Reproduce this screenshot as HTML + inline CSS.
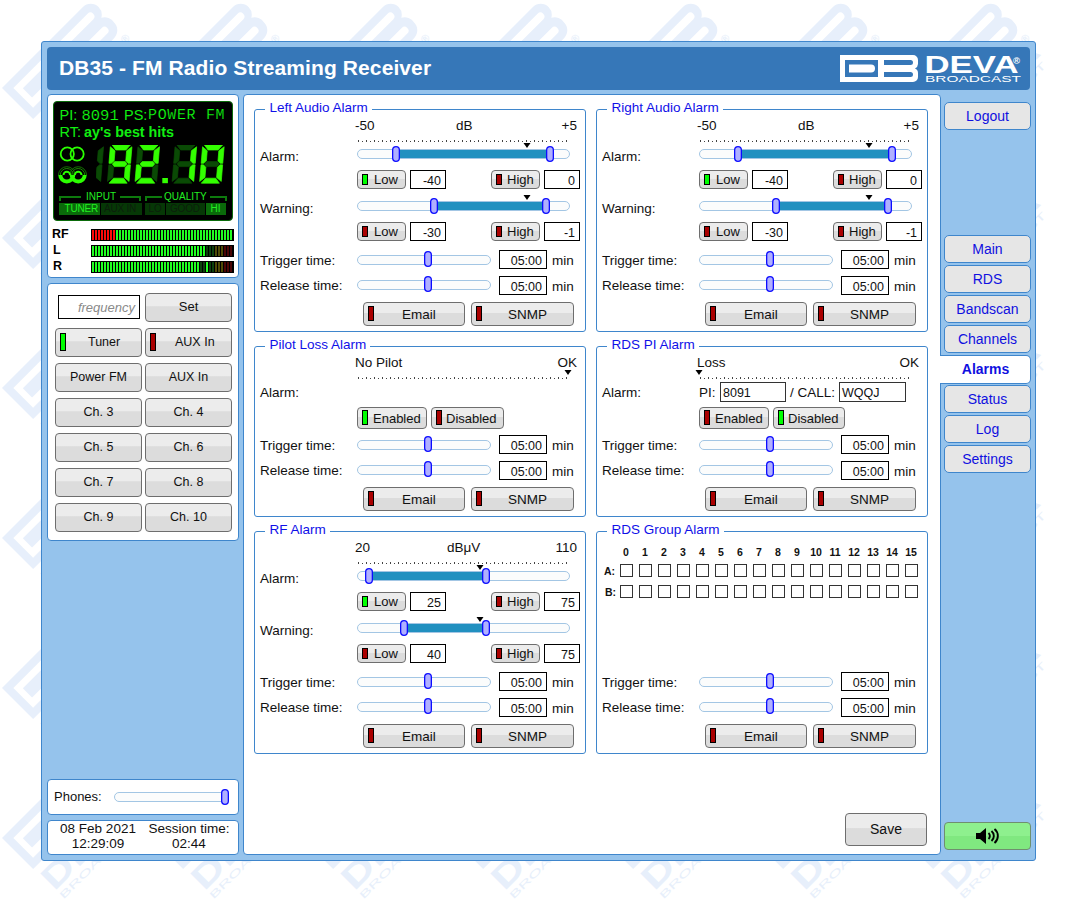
<!DOCTYPE html><html><head><meta charset="utf-8"><style>

html,body{margin:0;padding:0;}
body{width:1077px;height:902px;position:relative;overflow:hidden;background:#fff;font-family:'Liberation Sans', sans-serif;}
div{position:absolute;box-sizing:content-box;}
.t{white-space:nowrap;font-size:13.5px;color:#111;line-height:0;}
.t::before{content:"";}
.bt{text-align:center;white-space:nowrap;color:#111;}
.btn{border:1px solid #6e6e6e;border-radius:4px;background:linear-gradient(#ececec 0,#ececec 44%,#dcdcdc 47%,#dcdcdc 100%);}
.led{border:1px solid #000;}
.inp{border:1px solid #000;background:#fff;white-space:nowrap;color:#111;}
.trk{border:1px solid #a3c6e4;border-radius:5px;background:#fbfcfc;}
.rng{background:#2190c0;}
.thm{width:4px;height:12px;border:2px solid #0a0aff;border-radius:4px;background:#b0b0ff;}
.fs{border:1px solid #3f86cc;border-radius:3px;}
.lg{background:#fff;color:#1010e8;font-size:13.5px;line-height:18px;height:18px;padding:0 4px 0 5px;white-space:nowrap;}
.nav{border:1px solid #3f86cc;border-radius:5px;background:#e6e6e6;}

</style></head><body>
<svg style="position:absolute;left:0;top:0" width="1050" height="902"><defs><g id="wm"><path fill="#e7effb" fill-rule="evenodd" d="M0,0 H114.5 A11,11 0 0 1 125.5,11 A11,11 0 0 1 120,20.5 A11,11 0 0 1 125.5,33 A11,11 0 0 1 114.5,44 H0 Z M8,8 V36 H61 V8 Z M71,8 V16 H113 A4,4 0 0 0 113,8 Z M71,28 V36 H113 A4,4 0 0 0 113,28 Z M14.5,15 H50 A6.5,6.5 0 0 1 50,28 H14.5 Z"/><text x="-1" y="75" font-family="'Liberation Sans', sans-serif" font-weight="bold" font-size="33" fill="#e7effb" textLength="124" lengthAdjust="spacingAndGlyphs">DEVA</text><text x="118" y="56" font-family="'Liberation Sans', sans-serif" font-weight="bold" font-size="11" fill="#e7effb">®</text><text x="0" y="87" font-family="'Liberation Sans', sans-serif" font-size="10" fill="#e7effb" textLength="118" lengthAdjust="spacingAndGlyphs">BROADCAST</text></g></defs>
<use href="#wm" transform="translate(-148,-62) rotate(-45)"/>
<use href="#wm" transform="translate(2,-62) rotate(-45)"/>
<use href="#wm" transform="translate(152,-62) rotate(-45)"/>
<use href="#wm" transform="translate(302,-62) rotate(-45)"/>
<use href="#wm" transform="translate(452,-62) rotate(-45)"/>
<use href="#wm" transform="translate(602,-62) rotate(-45)"/>
<use href="#wm" transform="translate(752,-62) rotate(-45)"/>
<use href="#wm" transform="translate(902,-62) rotate(-45)"/>
<use href="#wm" transform="translate(-148,88) rotate(-45)"/>
<use href="#wm" transform="translate(2,88) rotate(-45)"/>
<use href="#wm" transform="translate(152,88) rotate(-45)"/>
<use href="#wm" transform="translate(302,88) rotate(-45)"/>
<use href="#wm" transform="translate(452,88) rotate(-45)"/>
<use href="#wm" transform="translate(602,88) rotate(-45)"/>
<use href="#wm" transform="translate(752,88) rotate(-45)"/>
<use href="#wm" transform="translate(902,88) rotate(-45)"/>
<use href="#wm" transform="translate(-148,238) rotate(-45)"/>
<use href="#wm" transform="translate(2,238) rotate(-45)"/>
<use href="#wm" transform="translate(152,238) rotate(-45)"/>
<use href="#wm" transform="translate(302,238) rotate(-45)"/>
<use href="#wm" transform="translate(452,238) rotate(-45)"/>
<use href="#wm" transform="translate(602,238) rotate(-45)"/>
<use href="#wm" transform="translate(752,238) rotate(-45)"/>
<use href="#wm" transform="translate(902,238) rotate(-45)"/>
<use href="#wm" transform="translate(-148,388) rotate(-45)"/>
<use href="#wm" transform="translate(2,388) rotate(-45)"/>
<use href="#wm" transform="translate(152,388) rotate(-45)"/>
<use href="#wm" transform="translate(302,388) rotate(-45)"/>
<use href="#wm" transform="translate(452,388) rotate(-45)"/>
<use href="#wm" transform="translate(602,388) rotate(-45)"/>
<use href="#wm" transform="translate(752,388) rotate(-45)"/>
<use href="#wm" transform="translate(902,388) rotate(-45)"/>
<use href="#wm" transform="translate(-148,538) rotate(-45)"/>
<use href="#wm" transform="translate(2,538) rotate(-45)"/>
<use href="#wm" transform="translate(152,538) rotate(-45)"/>
<use href="#wm" transform="translate(302,538) rotate(-45)"/>
<use href="#wm" transform="translate(452,538) rotate(-45)"/>
<use href="#wm" transform="translate(602,538) rotate(-45)"/>
<use href="#wm" transform="translate(752,538) rotate(-45)"/>
<use href="#wm" transform="translate(902,538) rotate(-45)"/>
<use href="#wm" transform="translate(-148,688) rotate(-45)"/>
<use href="#wm" transform="translate(2,688) rotate(-45)"/>
<use href="#wm" transform="translate(152,688) rotate(-45)"/>
<use href="#wm" transform="translate(302,688) rotate(-45)"/>
<use href="#wm" transform="translate(452,688) rotate(-45)"/>
<use href="#wm" transform="translate(602,688) rotate(-45)"/>
<use href="#wm" transform="translate(752,688) rotate(-45)"/>
<use href="#wm" transform="translate(902,688) rotate(-45)"/>
<use href="#wm" transform="translate(-148,838) rotate(-45)"/>
<use href="#wm" transform="translate(2,838) rotate(-45)"/>
<use href="#wm" transform="translate(152,838) rotate(-45)"/>
<use href="#wm" transform="translate(302,838) rotate(-45)"/>
<use href="#wm" transform="translate(452,838) rotate(-45)"/>
<use href="#wm" transform="translate(602,838) rotate(-45)"/>
<use href="#wm" transform="translate(752,838) rotate(-45)"/>
<use href="#wm" transform="translate(902,838) rotate(-45)"/>
<use href="#wm" transform="translate(-148,988) rotate(-45)"/>
<use href="#wm" transform="translate(2,988) rotate(-45)"/>
<use href="#wm" transform="translate(152,988) rotate(-45)"/>
<use href="#wm" transform="translate(302,988) rotate(-45)"/>
<use href="#wm" transform="translate(452,988) rotate(-45)"/>
<use href="#wm" transform="translate(602,988) rotate(-45)"/>
<use href="#wm" transform="translate(752,988) rotate(-45)"/>
<use href="#wm" transform="translate(902,988) rotate(-45)"/>
</svg>
<div style="left:41px;top:41px;width:993px;height:818px;border:1px solid #3f86cc;border-radius:3px;background:#95c3ec;"></div>
<div style="left:47px;top:47px;width:983px;height:43px;border-radius:4px;background:#3677b8;"></div>
<div class="t" style="left:59px;top:67.57px;font-size:21px;font-weight:bold;color:#fff;letter-spacing:0.1px;">DB35 - FM Radio Streaming Receiver</div>
<svg style="position:absolute;left:838px;top:53px" width="186" height="32"><path fill="#fff" fill-rule="evenodd" d="M2,2 H75 A5,5 0 0 1 80,7 V11 A5,5 0 0 1 77,15.4 A5,5 0 0 1 80,20 V24 A5,5 0 0 1 75,29 H2 Z M7,7 V24 H40 V7 Z M46,7 V12 H72.5 A2.5,2.5 0 0 0 72.5,7 Z M46,19 V24 H72.5 A2.5,2.5 0 0 0 72.5,19 Z"/><path fill="#fff" d="M11,11.5 H33 A4,4 0 0 1 33,19.5 H11 Z"/><text x="86.5" y="19.8" font-family="'Liberation Sans', sans-serif" font-weight="bold" font-size="24.5" fill="#fff" textLength="94" lengthAdjust="spacingAndGlyphs">DEVA</text><text x="87" y="29.2" font-family="'Liberation Sans', sans-serif" font-size="8.2" fill="#fff" textLength="96" lengthAdjust="spacingAndGlyphs">BROADCAST</text><text x="175" y="10.5" font-family="'Liberation Sans', sans-serif" font-size="9.5" font-weight="bold" fill="#fff">®</text></svg>
<div style="left:47px;top:94px;width:190px;height:182px;border:1px solid #3f86cc;border-radius:4px;background:#fff;"></div>
<div style="left:53px;top:101px;width:178px;height:118px;border:1px solid #0b6b0b;border-radius:4px;background:#000;"></div>
<div class="t" style="left:59.5px;top:115.22px;color:#11ee11;font-size:14.5px;">PI:</div>
<div class="t" style="left:81.5px;top:115.89px;color:#11ff11;font-family:'Liberation Mono', monospace;font-size:15.5px;-webkit-text-stroke:0.2px #000;">8091</div>
<div class="t" style="left:124px;top:115.22px;color:#11ee11;font-size:14.5px;">PS:</div>
<div class="t" style="left:148px;top:116.05px;color:#11ff11;font-family:'Liberation Mono', monospace;font-size:15px;letter-spacing:0.65px;-webkit-text-stroke:0.2px #000;">POWER FM</div>
<div class="t" style="left:59.5px;top:132.22px;color:#11ee11;font-size:14.5px;">RT:</div>
<div class="t" style="left:84px;top:132.28px;color:#11ee11;font-size:14.3px;font-weight:bold;">ay's best hits</div>
<svg style="position:absolute;left:56px;top:144px" width="36" height="46"><circle cx="11.3" cy="10" r="6.6" fill="none" stroke="#2bff00" stroke-width="1.8"/><circle cx="21.1" cy="10" r="6.6" fill="none" stroke="#2bff00" stroke-width="1.8"/><path d="M4.3,31 A6.5,6.5 0 0 0 17.3,31 M15.7,31 A6.5,6.5 0 0 0 28.7,31" fill="none" stroke="#2bff00" stroke-width="4"/><path d="M17.3,31 A6.5,6.5 0 0 0 4.3,31 M28.7,31 A6.5,6.5 0 0 0 15.7,31" fill="none" stroke="#1a8a00" stroke-width="1"/><path d="M2.5,31 A8.3,8.3 0 0 1 19.1,31 M13.9,31 A8.3,8.3 0 0 1 30.5,31" fill="none" stroke="#158000" stroke-width="0.9"/><path d="M7.5,31 A3.3,3.3 0 0 1 14.1,31 M18.9,31 A3.3,3.3 0 0 1 25.5,31" fill="none" stroke="#2bff00" stroke-width="2"/><circle cx="10.8" cy="31" r="1.3" fill="#000"/><circle cx="22.2" cy="31" r="1.3" fill="#000"/></svg>
<svg style="position:absolute;left:96px;top:145px" width="132" height="40"><polygon points="7.55,1.75 6.16,18.35 3.66,18.35 1.37,15.85 2.22,5.75" fill="#0a4a05" stroke="#0a4a05" stroke-width="0.7" stroke-linejoin="round"/><polygon points="6.04,19.85 4.65,36.45 -0.02,32.45 0.83,22.35 3.54,19.85" fill="#0a4a05" stroke="#0a4a05" stroke-width="0.7" stroke-linejoin="round"/><polygon points="16.25,0.00 34.35,0.00 29.93,5.00 19.83,5.00" fill="#33ff00" stroke="#33ff00" stroke-width="0.7" stroke-linejoin="round"/><polygon points="17.47,33.20 27.57,33.20 31.15,38.20 13.05,38.20" fill="#33ff00" stroke="#33ff00" stroke-width="0.7" stroke-linejoin="round"/><polygon points="16.30,19.10 18.56,16.60 29.26,16.60 31.10,19.10 28.84,21.60 18.14,21.60" fill="#33ff00" stroke="#33ff00" stroke-width="0.7" stroke-linejoin="round"/><polygon points="14.35,1.75 19.02,5.75 18.17,15.85 15.46,18.35 12.96,18.35" fill="#33ff00" stroke="#33ff00" stroke-width="0.7" stroke-linejoin="round"/><polygon points="12.84,19.85 15.34,19.85 17.63,22.35 16.78,32.45 11.45,36.45" fill="#0a4a05" stroke="#0a4a05" stroke-width="0.7" stroke-linejoin="round"/><polygon points="35.95,1.75 34.56,18.35 32.06,18.35 29.77,15.85 30.62,5.75" fill="#33ff00" stroke="#33ff00" stroke-width="0.7" stroke-linejoin="round"/><polygon points="34.44,19.85 33.05,36.45 28.38,32.45 29.23,22.35 31.94,19.85" fill="#33ff00" stroke="#33ff00" stroke-width="0.7" stroke-linejoin="round"/><polygon points="43.85,0.00 61.95,0.00 57.53,5.00 47.43,5.00" fill="#33ff00" stroke="#33ff00" stroke-width="0.7" stroke-linejoin="round"/><polygon points="45.07,33.20 55.17,33.20 58.75,38.20 40.65,38.20" fill="#33ff00" stroke="#33ff00" stroke-width="0.7" stroke-linejoin="round"/><polygon points="43.90,19.10 46.16,16.60 56.86,16.60 58.70,19.10 56.44,21.60 45.74,21.60" fill="#33ff00" stroke="#33ff00" stroke-width="0.7" stroke-linejoin="round"/><polygon points="41.95,1.75 46.62,5.75 45.77,15.85 43.06,18.35 40.56,18.35" fill="#0a4a05" stroke="#0a4a05" stroke-width="0.7" stroke-linejoin="round"/><polygon points="40.44,19.85 42.94,19.85 45.23,22.35 44.38,32.45 39.05,36.45" fill="#33ff00" stroke="#33ff00" stroke-width="0.7" stroke-linejoin="round"/><polygon points="63.55,1.75 62.16,18.35 59.66,18.35 57.37,15.85 58.22,5.75" fill="#33ff00" stroke="#33ff00" stroke-width="0.7" stroke-linejoin="round"/><polygon points="62.04,19.85 60.65,36.45 55.98,32.45 56.83,22.35 59.54,19.85" fill="#0a4a05" stroke="#0a4a05" stroke-width="0.7" stroke-linejoin="round"/><rect x="66.3" y="33.0" width="5.6" height="5.2" fill="#33ff00"/><polygon points="80.95,0.00 99.05,0.00 94.63,5.00 84.53,5.00" fill="#0a4a05" stroke="#0a4a05" stroke-width="0.7" stroke-linejoin="round"/><polygon points="82.17,33.20 92.27,33.20 95.85,38.20 77.75,38.20" fill="#0a4a05" stroke="#0a4a05" stroke-width="0.7" stroke-linejoin="round"/><polygon points="81.00,19.10 83.26,16.60 93.96,16.60 95.80,19.10 93.54,21.60 82.84,21.60" fill="#0a4a05" stroke="#0a4a05" stroke-width="0.7" stroke-linejoin="round"/><polygon points="79.05,1.75 83.72,5.75 82.87,15.85 80.16,18.35 77.66,18.35" fill="#0a4a05" stroke="#0a4a05" stroke-width="0.7" stroke-linejoin="round"/><polygon points="77.54,19.85 80.04,19.85 82.33,22.35 81.48,32.45 76.15,36.45" fill="#0a4a05" stroke="#0a4a05" stroke-width="0.7" stroke-linejoin="round"/><polygon points="100.65,1.75 99.26,18.35 96.76,18.35 94.47,15.85 95.32,5.75" fill="#33ff00" stroke="#33ff00" stroke-width="0.7" stroke-linejoin="round"/><polygon points="99.14,19.85 97.75,36.45 93.08,32.45 93.93,22.35 96.64,19.85" fill="#33ff00" stroke="#33ff00" stroke-width="0.7" stroke-linejoin="round"/><polygon points="108.45,0.00 126.55,0.00 122.13,5.00 112.03,5.00" fill="#33ff00" stroke="#33ff00" stroke-width="0.7" stroke-linejoin="round"/><polygon points="109.67,33.20 119.77,33.20 123.35,38.20 105.25,38.20" fill="#33ff00" stroke="#33ff00" stroke-width="0.7" stroke-linejoin="round"/><polygon points="108.50,19.10 110.76,16.60 121.46,16.60 123.30,19.10 121.04,21.60 110.34,21.60" fill="#0a4a05" stroke="#0a4a05" stroke-width="0.7" stroke-linejoin="round"/><polygon points="106.55,1.75 111.22,5.75 110.37,15.85 107.66,18.35 105.16,18.35" fill="#33ff00" stroke="#33ff00" stroke-width="0.7" stroke-linejoin="round"/><polygon points="105.04,19.85 107.54,19.85 109.83,22.35 108.98,32.45 103.65,36.45" fill="#33ff00" stroke="#33ff00" stroke-width="0.7" stroke-linejoin="round"/><polygon points="128.15,1.75 126.76,18.35 124.26,18.35 121.97,15.85 122.82,5.75" fill="#33ff00" stroke="#33ff00" stroke-width="0.7" stroke-linejoin="round"/><polygon points="126.64,19.85 125.25,36.45 120.58,32.45 121.43,22.35 124.14,19.85" fill="#33ff00" stroke="#33ff00" stroke-width="0.7" stroke-linejoin="round"/></svg>
<svg style="position:absolute;left:53px;top:190px" width="180" height="30"><path d="M7,11 V7 H28 M67,7 H87 V11 M93,11 V7 H109 M157,7 H173 V11" fill="none" stroke="#0d7a0d" stroke-width="2"/><rect x="6" y="13" width="41" height="12" fill="#0a6a0a"/><rect x="48" y="13" width="41" height="12" fill="#063806"/><rect x="92" y="13" width="20" height="12" fill="#063806"/><rect x="113" y="13" width="39" height="12" fill="#063806"/><rect x="153" y="13" width="20" height="12" fill="#0a6a0a"/></svg>
<div class="t" style="left:86px;top:197.20px;color:#22ee22;font-size:10px;">INPUT</div>
<div class="t" style="left:164px;top:197.20px;color:#22ee22;font-size:10px;">QUALITY</div>
<div class="t" style="left:64.5px;top:208.70px;color:#22ee22;font-size:10px;letter-spacing:-0.2px;">TUNER</div>
<div class="t" style="left:104px;top:208.70px;color:#0c1e0c;font-size:10px;letter-spacing:-0.2px;">AUX IN</div>
<div class="t" style="left:148.5px;top:208.70px;color:#0c1e0c;font-size:10px;">LO</div>
<div class="t" style="left:170px;top:208.70px;color:#0c1e0c;font-size:10px;letter-spacing:-0.2px;">GOOD</div>
<div class="t" style="left:210.5px;top:208.70px;color:#22ee22;font-size:10px;">HI</div>
<svg style="position:absolute;left:91px;top:229px" width="143" height="12"><rect x="0" y="0" width="143" height="12" fill="#000"/><rect x="1" y="1" width="2" height="10" fill="#ff0a0a"/><rect x="4" y="1" width="2" height="10" fill="#ff0a0a"/><rect x="7" y="1" width="2" height="10" fill="#ff0a0a"/><rect x="10" y="1" width="2" height="10" fill="#ff0a0a"/><rect x="13" y="1" width="2" height="10" fill="#ff0a0a"/><rect x="16" y="1" width="2" height="10" fill="#ff0a0a"/><rect x="19" y="1" width="2" height="10" fill="#ff0a0a"/><rect x="22" y="1" width="2" height="10" fill="#ff0a0a"/><rect x="25" y="1" width="2" height="10" fill="#22ff22"/><rect x="28" y="1" width="2" height="10" fill="#22ff22"/><rect x="31" y="1" width="2" height="10" fill="#22ff22"/><rect x="34" y="1" width="2" height="10" fill="#22ff22"/><rect x="37" y="1" width="2" height="10" fill="#22ff22"/><rect x="40" y="1" width="2" height="10" fill="#22ff22"/><rect x="43" y="1" width="2" height="10" fill="#22ff22"/><rect x="46" y="1" width="2" height="10" fill="#22ff22"/><rect x="49" y="1" width="2" height="10" fill="#22ff22"/><rect x="52" y="1" width="2" height="10" fill="#22ff22"/><rect x="55" y="1" width="2" height="10" fill="#22ff22"/><rect x="58" y="1" width="2" height="10" fill="#22ff22"/><rect x="61" y="1" width="2" height="10" fill="#22ff22"/><rect x="64" y="1" width="2" height="10" fill="#22ff22"/><rect x="67" y="1" width="2" height="10" fill="#22ff22"/><rect x="70" y="1" width="2" height="10" fill="#22ff22"/><rect x="73" y="1" width="2" height="10" fill="#22ff22"/><rect x="76" y="1" width="2" height="10" fill="#22ff22"/><rect x="79" y="1" width="2" height="10" fill="#22ff22"/><rect x="82" y="1" width="2" height="10" fill="#22ff22"/><rect x="85" y="1" width="2" height="10" fill="#22ff22"/><rect x="88" y="1" width="2" height="10" fill="#22ff22"/><rect x="91" y="1" width="2" height="10" fill="#22ff22"/><rect x="94" y="1" width="2" height="10" fill="#22ff22"/><rect x="97" y="1" width="2" height="10" fill="#22ff22"/><rect x="100" y="1" width="2" height="10" fill="#22ff22"/><rect x="103" y="1" width="2" height="10" fill="#22ff22"/><rect x="106" y="1" width="2" height="10" fill="#22ff22"/><rect x="109" y="1" width="2" height="10" fill="#22ff22"/><rect x="112" y="1" width="2" height="10" fill="#22ff22"/><rect x="115" y="1" width="2" height="10" fill="#22ff22"/><rect x="118" y="1" width="2" height="10" fill="#22ff22"/><rect x="121" y="1" width="2" height="10" fill="#22ff22"/><rect x="124" y="1" width="2" height="10" fill="#22ff22"/><rect x="127" y="1" width="2" height="10" fill="#22ff22"/><rect x="130" y="1" width="2" height="10" fill="#22ff22"/><rect x="133" y="1" width="2" height="10" fill="#22ff22"/><rect x="136" y="1" width="2" height="10" fill="#22ff22"/><rect x="139" y="1" width="2" height="10" fill="#22ff22"/></svg>
<svg style="position:absolute;left:91px;top:245px" width="143" height="12"><rect x="0" y="0" width="143" height="12" fill="#000"/><rect x="1" y="1" width="2" height="10" fill="#22ff22"/><rect x="4" y="1" width="2" height="10" fill="#22ff22"/><rect x="7" y="1" width="2" height="10" fill="#22ff22"/><rect x="10" y="1" width="2" height="10" fill="#22ff22"/><rect x="13" y="1" width="2" height="10" fill="#22ff22"/><rect x="16" y="1" width="2" height="10" fill="#22ff22"/><rect x="19" y="1" width="2" height="10" fill="#22ff22"/><rect x="22" y="1" width="2" height="10" fill="#22ff22"/><rect x="25" y="1" width="2" height="10" fill="#22ff22"/><rect x="28" y="1" width="2" height="10" fill="#22ff22"/><rect x="31" y="1" width="2" height="10" fill="#22ff22"/><rect x="34" y="1" width="2" height="10" fill="#22ff22"/><rect x="37" y="1" width="2" height="10" fill="#22ff22"/><rect x="40" y="1" width="2" height="10" fill="#22ff22"/><rect x="43" y="1" width="2" height="10" fill="#22ff22"/><rect x="46" y="1" width="2" height="10" fill="#22ff22"/><rect x="49" y="1" width="2" height="10" fill="#22ff22"/><rect x="52" y="1" width="2" height="10" fill="#22ff22"/><rect x="55" y="1" width="2" height="10" fill="#22ff22"/><rect x="58" y="1" width="2" height="10" fill="#22ff22"/><rect x="61" y="1" width="2" height="10" fill="#22ff22"/><rect x="64" y="1" width="2" height="10" fill="#22ff22"/><rect x="67" y="1" width="2" height="10" fill="#22ff22"/><rect x="70" y="1" width="2" height="10" fill="#22ff22"/><rect x="73" y="1" width="2" height="10" fill="#22ff22"/><rect x="76" y="1" width="2" height="10" fill="#22ff22"/><rect x="79" y="1" width="2" height="10" fill="#22ff22"/><rect x="82" y="1" width="2" height="10" fill="#22ff22"/><rect x="85" y="1" width="2" height="10" fill="#22ff22"/><rect x="88" y="1" width="2" height="10" fill="#22ff22"/><rect x="91" y="1" width="2" height="10" fill="#22ff22"/><rect x="94" y="1" width="2" height="10" fill="#22ff22"/><rect x="97" y="1" width="2" height="10" fill="#22ff22"/><rect x="100" y="1" width="2" height="10" fill="#22ff22"/><rect x="103" y="1" width="2" height="10" fill="#22ff22"/><rect x="106" y="1" width="2" height="10" fill="#22ff22"/><rect x="109" y="1" width="2" height="10" fill="#22ff22"/><rect x="112" y="1" width="2" height="10" fill="#22ff22"/><rect x="115" y="1" width="2" height="10" fill="#0b420b"/><rect x="118" y="1" width="2" height="10" fill="#0b420b"/><rect x="121" y="1" width="2" height="10" fill="#0b420b"/><rect x="124" y="1" width="2" height="10" fill="#4e4a05"/><rect x="127" y="1" width="2" height="10" fill="#4e4a05"/><rect x="130" y="1" width="2" height="10" fill="#4e4a05"/><rect x="133" y="1" width="2" height="10" fill="#4a0505"/><rect x="136" y="1" width="2" height="10" fill="#4a0505"/><rect x="139" y="1" width="2" height="10" fill="#4a0505"/></svg>
<svg style="position:absolute;left:91px;top:261px" width="143" height="12"><rect x="0" y="0" width="143" height="12" fill="#000"/><rect x="1" y="1" width="2" height="10" fill="#22ff22"/><rect x="4" y="1" width="2" height="10" fill="#22ff22"/><rect x="7" y="1" width="2" height="10" fill="#22ff22"/><rect x="10" y="1" width="2" height="10" fill="#22ff22"/><rect x="13" y="1" width="2" height="10" fill="#22ff22"/><rect x="16" y="1" width="2" height="10" fill="#22ff22"/><rect x="19" y="1" width="2" height="10" fill="#22ff22"/><rect x="22" y="1" width="2" height="10" fill="#22ff22"/><rect x="25" y="1" width="2" height="10" fill="#22ff22"/><rect x="28" y="1" width="2" height="10" fill="#22ff22"/><rect x="31" y="1" width="2" height="10" fill="#22ff22"/><rect x="34" y="1" width="2" height="10" fill="#22ff22"/><rect x="37" y="1" width="2" height="10" fill="#22ff22"/><rect x="40" y="1" width="2" height="10" fill="#22ff22"/><rect x="43" y="1" width="2" height="10" fill="#22ff22"/><rect x="46" y="1" width="2" height="10" fill="#22ff22"/><rect x="49" y="1" width="2" height="10" fill="#22ff22"/><rect x="52" y="1" width="2" height="10" fill="#22ff22"/><rect x="55" y="1" width="2" height="10" fill="#22ff22"/><rect x="58" y="1" width="2" height="10" fill="#22ff22"/><rect x="61" y="1" width="2" height="10" fill="#22ff22"/><rect x="64" y="1" width="2" height="10" fill="#22ff22"/><rect x="67" y="1" width="2" height="10" fill="#22ff22"/><rect x="70" y="1" width="2" height="10" fill="#22ff22"/><rect x="73" y="1" width="2" height="10" fill="#22ff22"/><rect x="76" y="1" width="2" height="10" fill="#22ff22"/><rect x="79" y="1" width="2" height="10" fill="#22ff22"/><rect x="82" y="1" width="2" height="10" fill="#22ff22"/><rect x="85" y="1" width="2" height="10" fill="#22ff22"/><rect x="88" y="1" width="2" height="10" fill="#22ff22"/><rect x="91" y="1" width="2" height="10" fill="#22ff22"/><rect x="94" y="1" width="2" height="10" fill="#22ff22"/><rect x="97" y="1" width="2" height="10" fill="#22ff22"/><rect x="100" y="1" width="2" height="10" fill="#22ff22"/><rect x="103" y="1" width="2" height="10" fill="#22ff22"/><rect x="106" y="1" width="2" height="10" fill="#22ff22"/><rect x="109" y="1" width="2" height="10" fill="#0b420b"/><rect x="112" y="1" width="2" height="10" fill="#0b420b"/><rect x="115" y="1" width="2" height="10" fill="#22ff22"/><rect x="118" y="1" width="2" height="10" fill="#0b420b"/><rect x="121" y="1" width="2" height="10" fill="#0b420b"/><rect x="124" y="1" width="2" height="10" fill="#4e4a05"/><rect x="127" y="1" width="2" height="10" fill="#4e4a05"/><rect x="130" y="1" width="2" height="10" fill="#4e4a05"/><rect x="133" y="1" width="2" height="10" fill="#4a0505"/><rect x="136" y="1" width="2" height="10" fill="#4a0505"/><rect x="139" y="1" width="2" height="10" fill="#4a0505"/></svg>
<div class="t" style="left:52px;top:233.88px;font-weight:bold;font-size:12.5px;color:#000;">RF</div>
<div class="t" style="left:53px;top:249.88px;font-weight:bold;font-size:12.5px;color:#000;">L</div>
<div class="t" style="left:53px;top:265.88px;font-weight:bold;font-size:12.5px;color:#000;">R</div>
<div style="left:47px;top:283px;width:190px;height:256px;border:1px solid #3f86cc;border-radius:4px;background:#fff;"></div>
<div class="inp" style="left:58px;top:295px;width:76px;height:22px;line-height:23px;font-size:13px;text-align:right;padding-right:4px;color:#8a8a8a;font-style:italic;">frequency</div>
<div class="btn" style="left:145px;top:293px;width:85px;height:27px;"></div>
<div class="bt" style="left:145px;top:293px;width:87px;height:29px;line-height:27.5px;font-size:13px;">Set</div>
<div class="btn" style="left:55px;top:328px;width:85px;height:27px;"></div>
<div class="led" style="left:60px;top:333px;width:4px;height:16px;background:#00ff00"></div>
<div class="t" style="left:88px;top:341.68px;font-size:12.5px;">Tuner</div>
<div class="btn" style="left:145px;top:328px;width:85px;height:27px;"></div>
<div class="led" style="left:150px;top:333px;width:4px;height:16px;background:#aa0000"></div>
<div class="t" style="left:175px;top:341.68px;font-size:12.5px;">AUX In</div>
<div class="btn" style="left:55px;top:363px;width:85px;height:27px;"></div>
<div class="bt" style="left:55px;top:363px;width:87px;height:29px;line-height:28.5px;font-size:12.5px;">Power FM</div>
<div class="btn" style="left:145px;top:363px;width:85px;height:27px;"></div>
<div class="bt" style="left:145px;top:363px;width:87px;height:29px;line-height:28.5px;font-size:12.5px;">AUX In</div>
<div class="btn" style="left:55px;top:398px;width:85px;height:27px;"></div>
<div class="bt" style="left:55px;top:398px;width:87px;height:29px;line-height:28.5px;font-size:12.5px;">Ch. 3</div>
<div class="btn" style="left:145px;top:398px;width:85px;height:27px;"></div>
<div class="bt" style="left:145px;top:398px;width:87px;height:29px;line-height:28.5px;font-size:12.5px;">Ch. 4</div>
<div class="btn" style="left:55px;top:433px;width:85px;height:27px;"></div>
<div class="bt" style="left:55px;top:433px;width:87px;height:29px;line-height:28.5px;font-size:12.5px;">Ch. 5</div>
<div class="btn" style="left:145px;top:433px;width:85px;height:27px;"></div>
<div class="bt" style="left:145px;top:433px;width:87px;height:29px;line-height:28.5px;font-size:12.5px;">Ch. 6</div>
<div class="btn" style="left:55px;top:468px;width:85px;height:27px;"></div>
<div class="bt" style="left:55px;top:468px;width:87px;height:29px;line-height:28.5px;font-size:12.5px;">Ch. 7</div>
<div class="btn" style="left:145px;top:468px;width:85px;height:27px;"></div>
<div class="bt" style="left:145px;top:468px;width:87px;height:29px;line-height:28.5px;font-size:12.5px;">Ch. 8</div>
<div class="btn" style="left:55px;top:503px;width:85px;height:27px;"></div>
<div class="bt" style="left:55px;top:503px;width:87px;height:29px;line-height:28.5px;font-size:12.5px;">Ch. 9</div>
<div class="btn" style="left:145px;top:503px;width:85px;height:27px;"></div>
<div class="bt" style="left:145px;top:503px;width:87px;height:29px;line-height:28.5px;font-size:12.5px;">Ch. 10</div>
<div style="left:47px;top:779px;width:190px;height:34px;border:1px solid #3f86cc;border-radius:4px;background:#fff;"></div>
<div class="t" style="left:54px;top:796.71px;font-size:13px;">Phones:</div>
<div class="trk" style="left:114px;top:792px;width:113px;height:8px;"></div>
<svg style="position:absolute;left:221px;top:789px" width="8" height="16"><rect x="0.65" y="0.65" width="6.7" height="14.7" rx="3.35" fill="#b0b0ff" stroke="#0c0cff" stroke-width="1.3"/></svg>
<div style="left:47px;top:820px;width:190px;height:33px;border:1px solid #3f86cc;border-radius:4px;background:#fff;"></div>
<div class="t" style="left:49px;top:829.14px;width:98px;text-align:center;font-size:13.5px;">08 Feb 2021</div>
<div class="t" style="left:49px;top:843.54px;width:98px;text-align:center;font-size:13.5px;">12:29:09</div>
<div class="t" style="left:140px;top:829.14px;width:98px;text-align:center;font-size:13.5px;">Session time:</div>
<div class="t" style="left:140px;top:843.54px;width:98px;text-align:center;font-size:13.5px;">02:44</div>
<div style="left:243px;top:94px;width:696px;height:759px;border:1px solid #3f86cc;border-radius:4px;background:#fff;"></div>
<div class="fs" style="left:254px;top:109px;width:330px;height:221px;"></div>
<div class="lg" style="left:264.5px;top:98.7px;">Left Audio Alarm</div>
<div class="t" style="left:355px;top:125.55px;">-50</div>
<div class="t" style="left:456px;top:125.55px;">dB</div>
<div class="t" style="left:577px;top:125.55px;transform:translateX(-100%)">+5</div>
<svg style="position:absolute;left:358px;top:140px" width="209" height="2"><rect x="0" y="0" width="1" height="2" fill="#444"/><rect x="4" y="1" width="1" height="1" fill="#444"/><rect x="8" y="0" width="1" height="2" fill="#444"/><rect x="12" y="1" width="1" height="1" fill="#444"/><rect x="16" y="0" width="1" height="2" fill="#444"/><rect x="20" y="1" width="1" height="1" fill="#444"/><rect x="24" y="0" width="1" height="2" fill="#444"/><rect x="28" y="1" width="1" height="1" fill="#444"/><rect x="32" y="0" width="1" height="2" fill="#444"/><rect x="36" y="1" width="1" height="1" fill="#444"/><rect x="40" y="0" width="1" height="2" fill="#444"/><rect x="44" y="1" width="1" height="1" fill="#444"/><rect x="48" y="0" width="1" height="2" fill="#444"/><rect x="52" y="1" width="1" height="1" fill="#444"/><rect x="56" y="0" width="1" height="2" fill="#444"/><rect x="60" y="1" width="1" height="1" fill="#444"/><rect x="64" y="0" width="1" height="2" fill="#444"/><rect x="68" y="1" width="1" height="1" fill="#444"/><rect x="72" y="0" width="1" height="2" fill="#444"/><rect x="76" y="1" width="1" height="1" fill="#444"/><rect x="80" y="0" width="1" height="2" fill="#444"/><rect x="84" y="1" width="1" height="1" fill="#444"/><rect x="88" y="0" width="1" height="2" fill="#444"/><rect x="92" y="1" width="1" height="1" fill="#444"/><rect x="96" y="0" width="1" height="2" fill="#444"/><rect x="100" y="1" width="1" height="1" fill="#444"/><rect x="104" y="0" width="1" height="2" fill="#444"/><rect x="108" y="1" width="1" height="1" fill="#444"/><rect x="112" y="0" width="1" height="2" fill="#444"/><rect x="116" y="1" width="1" height="1" fill="#444"/><rect x="120" y="0" width="1" height="2" fill="#444"/><rect x="124" y="1" width="1" height="1" fill="#444"/><rect x="128" y="0" width="1" height="2" fill="#444"/><rect x="132" y="1" width="1" height="1" fill="#444"/><rect x="136" y="0" width="1" height="2" fill="#444"/><rect x="140" y="1" width="1" height="1" fill="#444"/><rect x="144" y="0" width="1" height="2" fill="#444"/><rect x="148" y="1" width="1" height="1" fill="#444"/><rect x="152" y="0" width="1" height="2" fill="#444"/><rect x="156" y="1" width="1" height="1" fill="#444"/><rect x="160" y="0" width="1" height="2" fill="#444"/><rect x="164" y="1" width="1" height="1" fill="#444"/><rect x="168" y="0" width="1" height="2" fill="#444"/><rect x="172" y="1" width="1" height="1" fill="#444"/><rect x="176" y="0" width="1" height="2" fill="#444"/><rect x="180" y="1" width="1" height="1" fill="#444"/><rect x="184" y="0" width="1" height="2" fill="#444"/><rect x="188" y="1" width="1" height="1" fill="#444"/><rect x="192" y="0" width="1" height="2" fill="#444"/><rect x="196" y="1" width="1" height="1" fill="#444"/><rect x="200" y="0" width="1" height="2" fill="#444"/><rect x="204" y="1" width="1" height="1" fill="#444"/><rect x="208" y="0" width="1" height="2" fill="#444"/></svg>
<svg style="position:absolute;left:523px;top:143px" width="8" height="5"><polygon points="0.5,0 7.5,0 4,5" fill="#000"/></svg>
<div class="t" style="left:260px;top:156.54px;">Alarm:</div>
<div class="trk" style="left:357px;top:149px;width:211px;height:8px;"></div>
<div class="rng" style="left:396px;top:150px;width:155px;height:8px;"></div>
<svg style="position:absolute;left:392px;top:146px" width="8" height="16"><rect x="0.65" y="0.65" width="6.7" height="14.7" rx="3.35" fill="#b0b0ff" stroke="#0c0cff" stroke-width="1.3"/></svg>
<svg style="position:absolute;left:546px;top:146px" width="8" height="16"><rect x="0.65" y="0.65" width="6.7" height="14.7" rx="3.35" fill="#b0b0ff" stroke="#0c0cff" stroke-width="1.3"/></svg>
<div class="btn" style="left:357px;top:170px;width:47px;height:17px;"></div>
<div class="led" style="left:362px;top:174px;width:4px;height:9px;background:#00ff00"></div>
<div class="t" style="left:374px;top:179.71px;font-size:13px;">Low</div>
<div class="inp" style="left:410px;top:170px;width:30px;height:17px;line-height:21.5px;font-size:12.5px;text-align:right;padding-right:4px;">-40</div>
<div class="btn" style="left:491px;top:170px;width:47px;height:17px;"></div>
<div class="led" style="left:496px;top:174px;width:4px;height:9px;background:#aa0000"></div>
<div class="t" style="left:507px;top:179.71px;font-size:13px;">High</div>
<div class="inp" style="left:544px;top:170px;width:30px;height:17px;line-height:21.5px;font-size:12.5px;text-align:right;padding-right:4px;">0</div>
<div class="t" style="left:260px;top:208.54px;">Warning:</div>
<svg style="position:absolute;left:523px;top:195px" width="8" height="5"><polygon points="0.5,0 7.5,0 4,5" fill="#000"/></svg>
<div class="trk" style="left:357px;top:201px;width:211px;height:8px;"></div>
<div class="rng" style="left:434px;top:202px;width:113px;height:8px;"></div>
<svg style="position:absolute;left:430px;top:198px" width="8" height="16"><rect x="0.65" y="0.65" width="6.7" height="14.7" rx="3.35" fill="#b0b0ff" stroke="#0c0cff" stroke-width="1.3"/></svg>
<svg style="position:absolute;left:542px;top:198px" width="8" height="16"><rect x="0.65" y="0.65" width="6.7" height="14.7" rx="3.35" fill="#b0b0ff" stroke="#0c0cff" stroke-width="1.3"/></svg>
<div class="btn" style="left:357px;top:222px;width:47px;height:17px;"></div>
<div class="led" style="left:362px;top:226px;width:4px;height:9px;background:#aa0000"></div>
<div class="t" style="left:374px;top:231.71px;font-size:13px;">Low</div>
<div class="inp" style="left:410px;top:222px;width:30px;height:17px;line-height:21.5px;font-size:12.5px;text-align:right;padding-right:4px;">-30</div>
<div class="btn" style="left:491px;top:222px;width:47px;height:17px;"></div>
<div class="led" style="left:496px;top:226px;width:4px;height:9px;background:#aa0000"></div>
<div class="t" style="left:507px;top:231.71px;font-size:13px;">High</div>
<div class="inp" style="left:544px;top:222px;width:30px;height:17px;line-height:21.5px;font-size:12.5px;text-align:right;padding-right:4px;">-1</div>
<div class="t" style="left:260px;top:260.55px;">Trigger time:</div>
<div class="trk" style="left:357px;top:255px;width:132px;height:8px;"></div>
<svg style="position:absolute;left:424px;top:251px" width="8" height="16"><rect x="0.65" y="0.65" width="6.7" height="14.7" rx="3.35" fill="#b0b0ff" stroke="#0c0cff" stroke-width="1.3"/></svg>
<div class="inp" style="left:499px;top:250px;width:42px;height:17px;line-height:21.5px;font-size:12.5px;text-align:right;padding-right:4px;">05:00</div>
<div class="t" style="left:552px;top:260.55px;">min</div>
<div class="t" style="left:260px;top:285.55px;">Release time:</div>
<div class="trk" style="left:357px;top:280px;width:132px;height:8px;"></div>
<svg style="position:absolute;left:424px;top:276px" width="8" height="16"><rect x="0.65" y="0.65" width="6.7" height="14.7" rx="3.35" fill="#b0b0ff" stroke="#0c0cff" stroke-width="1.3"/></svg>
<div class="inp" style="left:499px;top:276px;width:42px;height:17px;line-height:21.5px;font-size:12.5px;text-align:right;padding-right:4px;">05:00</div>
<div class="t" style="left:552px;top:286.55px;">min</div>
<div class="btn" style="left:363px;top:302px;width:100px;height:22px;"></div>
<div class="led" style="left:368px;top:306px;width:4px;height:13px;background:#aa0000"></div>
<div class="bt" style="left:368px;top:302px;width:102px;height:24px;line-height:25.1px;font-size:13.5px;">Email</div>
<div class="btn" style="left:471px;top:302px;width:101px;height:22px;"></div>
<div class="led" style="left:476px;top:306px;width:4px;height:13px;background:#aa0000"></div>
<div class="bt" style="left:476px;top:302px;width:103px;height:24px;line-height:25.1px;font-size:13.5px;">SNMP</div>
<div class="fs" style="left:596px;top:109px;width:330px;height:221px;"></div>
<div class="lg" style="left:606.5px;top:98.7px;">Right Audio Alarm</div>
<div class="t" style="left:697px;top:125.55px;">-50</div>
<div class="t" style="left:798px;top:125.55px;">dB</div>
<div class="t" style="left:919px;top:125.55px;transform:translateX(-100%)">+5</div>
<svg style="position:absolute;left:700px;top:140px" width="209" height="2"><rect x="0" y="0" width="1" height="2" fill="#444"/><rect x="4" y="1" width="1" height="1" fill="#444"/><rect x="8" y="0" width="1" height="2" fill="#444"/><rect x="12" y="1" width="1" height="1" fill="#444"/><rect x="16" y="0" width="1" height="2" fill="#444"/><rect x="20" y="1" width="1" height="1" fill="#444"/><rect x="24" y="0" width="1" height="2" fill="#444"/><rect x="28" y="1" width="1" height="1" fill="#444"/><rect x="32" y="0" width="1" height="2" fill="#444"/><rect x="36" y="1" width="1" height="1" fill="#444"/><rect x="40" y="0" width="1" height="2" fill="#444"/><rect x="44" y="1" width="1" height="1" fill="#444"/><rect x="48" y="0" width="1" height="2" fill="#444"/><rect x="52" y="1" width="1" height="1" fill="#444"/><rect x="56" y="0" width="1" height="2" fill="#444"/><rect x="60" y="1" width="1" height="1" fill="#444"/><rect x="64" y="0" width="1" height="2" fill="#444"/><rect x="68" y="1" width="1" height="1" fill="#444"/><rect x="72" y="0" width="1" height="2" fill="#444"/><rect x="76" y="1" width="1" height="1" fill="#444"/><rect x="80" y="0" width="1" height="2" fill="#444"/><rect x="84" y="1" width="1" height="1" fill="#444"/><rect x="88" y="0" width="1" height="2" fill="#444"/><rect x="92" y="1" width="1" height="1" fill="#444"/><rect x="96" y="0" width="1" height="2" fill="#444"/><rect x="100" y="1" width="1" height="1" fill="#444"/><rect x="104" y="0" width="1" height="2" fill="#444"/><rect x="108" y="1" width="1" height="1" fill="#444"/><rect x="112" y="0" width="1" height="2" fill="#444"/><rect x="116" y="1" width="1" height="1" fill="#444"/><rect x="120" y="0" width="1" height="2" fill="#444"/><rect x="124" y="1" width="1" height="1" fill="#444"/><rect x="128" y="0" width="1" height="2" fill="#444"/><rect x="132" y="1" width="1" height="1" fill="#444"/><rect x="136" y="0" width="1" height="2" fill="#444"/><rect x="140" y="1" width="1" height="1" fill="#444"/><rect x="144" y="0" width="1" height="2" fill="#444"/><rect x="148" y="1" width="1" height="1" fill="#444"/><rect x="152" y="0" width="1" height="2" fill="#444"/><rect x="156" y="1" width="1" height="1" fill="#444"/><rect x="160" y="0" width="1" height="2" fill="#444"/><rect x="164" y="1" width="1" height="1" fill="#444"/><rect x="168" y="0" width="1" height="2" fill="#444"/><rect x="172" y="1" width="1" height="1" fill="#444"/><rect x="176" y="0" width="1" height="2" fill="#444"/><rect x="180" y="1" width="1" height="1" fill="#444"/><rect x="184" y="0" width="1" height="2" fill="#444"/><rect x="188" y="1" width="1" height="1" fill="#444"/><rect x="192" y="0" width="1" height="2" fill="#444"/><rect x="196" y="1" width="1" height="1" fill="#444"/><rect x="200" y="0" width="1" height="2" fill="#444"/><rect x="204" y="1" width="1" height="1" fill="#444"/><rect x="208" y="0" width="1" height="2" fill="#444"/></svg>
<svg style="position:absolute;left:865px;top:143px" width="8" height="5"><polygon points="0.5,0 7.5,0 4,5" fill="#000"/></svg>
<div class="t" style="left:602px;top:156.54px;">Alarm:</div>
<div class="trk" style="left:699px;top:149px;width:211px;height:8px;"></div>
<div class="rng" style="left:738px;top:150px;width:155px;height:8px;"></div>
<svg style="position:absolute;left:734px;top:146px" width="8" height="16"><rect x="0.65" y="0.65" width="6.7" height="14.7" rx="3.35" fill="#b0b0ff" stroke="#0c0cff" stroke-width="1.3"/></svg>
<svg style="position:absolute;left:888px;top:146px" width="8" height="16"><rect x="0.65" y="0.65" width="6.7" height="14.7" rx="3.35" fill="#b0b0ff" stroke="#0c0cff" stroke-width="1.3"/></svg>
<div class="btn" style="left:699px;top:170px;width:47px;height:17px;"></div>
<div class="led" style="left:704px;top:174px;width:4px;height:9px;background:#00ff00"></div>
<div class="t" style="left:716px;top:179.71px;font-size:13px;">Low</div>
<div class="inp" style="left:752px;top:170px;width:30px;height:17px;line-height:21.5px;font-size:12.5px;text-align:right;padding-right:4px;">-40</div>
<div class="btn" style="left:833px;top:170px;width:47px;height:17px;"></div>
<div class="led" style="left:838px;top:174px;width:4px;height:9px;background:#aa0000"></div>
<div class="t" style="left:849px;top:179.71px;font-size:13px;">High</div>
<div class="inp" style="left:886px;top:170px;width:30px;height:17px;line-height:21.5px;font-size:12.5px;text-align:right;padding-right:4px;">0</div>
<div class="t" style="left:602px;top:208.54px;">Warning:</div>
<svg style="position:absolute;left:865px;top:195px" width="8" height="5"><polygon points="0.5,0 7.5,0 4,5" fill="#000"/></svg>
<div class="trk" style="left:699px;top:201px;width:211px;height:8px;"></div>
<div class="rng" style="left:776px;top:202px;width:113px;height:8px;"></div>
<svg style="position:absolute;left:772px;top:198px" width="8" height="16"><rect x="0.65" y="0.65" width="6.7" height="14.7" rx="3.35" fill="#b0b0ff" stroke="#0c0cff" stroke-width="1.3"/></svg>
<svg style="position:absolute;left:884px;top:198px" width="8" height="16"><rect x="0.65" y="0.65" width="6.7" height="14.7" rx="3.35" fill="#b0b0ff" stroke="#0c0cff" stroke-width="1.3"/></svg>
<div class="btn" style="left:699px;top:222px;width:47px;height:17px;"></div>
<div class="led" style="left:704px;top:226px;width:4px;height:9px;background:#aa0000"></div>
<div class="t" style="left:716px;top:231.71px;font-size:13px;">Low</div>
<div class="inp" style="left:752px;top:222px;width:30px;height:17px;line-height:21.5px;font-size:12.5px;text-align:right;padding-right:4px;">-30</div>
<div class="btn" style="left:833px;top:222px;width:47px;height:17px;"></div>
<div class="led" style="left:838px;top:226px;width:4px;height:9px;background:#aa0000"></div>
<div class="t" style="left:849px;top:231.71px;font-size:13px;">High</div>
<div class="inp" style="left:886px;top:222px;width:30px;height:17px;line-height:21.5px;font-size:12.5px;text-align:right;padding-right:4px;">-1</div>
<div class="t" style="left:602px;top:260.55px;">Trigger time:</div>
<div class="trk" style="left:699px;top:255px;width:132px;height:8px;"></div>
<svg style="position:absolute;left:766px;top:251px" width="8" height="16"><rect x="0.65" y="0.65" width="6.7" height="14.7" rx="3.35" fill="#b0b0ff" stroke="#0c0cff" stroke-width="1.3"/></svg>
<div class="inp" style="left:841px;top:250px;width:42px;height:17px;line-height:21.5px;font-size:12.5px;text-align:right;padding-right:4px;">05:00</div>
<div class="t" style="left:894px;top:260.55px;">min</div>
<div class="t" style="left:602px;top:285.55px;">Release time:</div>
<div class="trk" style="left:699px;top:280px;width:132px;height:8px;"></div>
<svg style="position:absolute;left:766px;top:276px" width="8" height="16"><rect x="0.65" y="0.65" width="6.7" height="14.7" rx="3.35" fill="#b0b0ff" stroke="#0c0cff" stroke-width="1.3"/></svg>
<div class="inp" style="left:841px;top:276px;width:42px;height:17px;line-height:21.5px;font-size:12.5px;text-align:right;padding-right:4px;">05:00</div>
<div class="t" style="left:894px;top:286.55px;">min</div>
<div class="btn" style="left:705px;top:302px;width:100px;height:22px;"></div>
<div class="led" style="left:710px;top:306px;width:4px;height:13px;background:#aa0000"></div>
<div class="bt" style="left:710px;top:302px;width:102px;height:24px;line-height:25.1px;font-size:13.5px;">Email</div>
<div class="btn" style="left:813px;top:302px;width:101px;height:22px;"></div>
<div class="led" style="left:818px;top:306px;width:4px;height:13px;background:#aa0000"></div>
<div class="bt" style="left:818px;top:302px;width:103px;height:24px;line-height:25.1px;font-size:13.5px;">SNMP</div>
<div class="fs" style="left:254px;top:346px;width:330px;height:169px;"></div>
<div class="lg" style="left:264.5px;top:335.7px;">Pilot Loss Alarm</div>
<div class="t" style="left:355px;top:362.55px;">No Pilot</div>
<div class="t" style="left:577px;top:362.55px;transform:translateX(-100%)">OK</div>
<svg style="position:absolute;left:564px;top:370px" width="8" height="5"><polygon points="0.5,0 7.5,0 4,5" fill="#000"/></svg>
<svg style="position:absolute;left:358px;top:377px" width="209" height="2"><rect x="0" y="0" width="1" height="2" fill="#444"/><rect x="4" y="1" width="1" height="1" fill="#444"/><rect x="8" y="0" width="1" height="2" fill="#444"/><rect x="12" y="1" width="1" height="1" fill="#444"/><rect x="16" y="0" width="1" height="2" fill="#444"/><rect x="20" y="1" width="1" height="1" fill="#444"/><rect x="24" y="0" width="1" height="2" fill="#444"/><rect x="28" y="1" width="1" height="1" fill="#444"/><rect x="32" y="0" width="1" height="2" fill="#444"/><rect x="36" y="1" width="1" height="1" fill="#444"/><rect x="40" y="0" width="1" height="2" fill="#444"/><rect x="44" y="1" width="1" height="1" fill="#444"/><rect x="48" y="0" width="1" height="2" fill="#444"/><rect x="52" y="1" width="1" height="1" fill="#444"/><rect x="56" y="0" width="1" height="2" fill="#444"/><rect x="60" y="1" width="1" height="1" fill="#444"/><rect x="64" y="0" width="1" height="2" fill="#444"/><rect x="68" y="1" width="1" height="1" fill="#444"/><rect x="72" y="0" width="1" height="2" fill="#444"/><rect x="76" y="1" width="1" height="1" fill="#444"/><rect x="80" y="0" width="1" height="2" fill="#444"/><rect x="84" y="1" width="1" height="1" fill="#444"/><rect x="88" y="0" width="1" height="2" fill="#444"/><rect x="92" y="1" width="1" height="1" fill="#444"/><rect x="96" y="0" width="1" height="2" fill="#444"/><rect x="100" y="1" width="1" height="1" fill="#444"/><rect x="104" y="0" width="1" height="2" fill="#444"/><rect x="108" y="1" width="1" height="1" fill="#444"/><rect x="112" y="0" width="1" height="2" fill="#444"/><rect x="116" y="1" width="1" height="1" fill="#444"/><rect x="120" y="0" width="1" height="2" fill="#444"/><rect x="124" y="1" width="1" height="1" fill="#444"/><rect x="128" y="0" width="1" height="2" fill="#444"/><rect x="132" y="1" width="1" height="1" fill="#444"/><rect x="136" y="0" width="1" height="2" fill="#444"/><rect x="140" y="1" width="1" height="1" fill="#444"/><rect x="144" y="0" width="1" height="2" fill="#444"/><rect x="148" y="1" width="1" height="1" fill="#444"/><rect x="152" y="0" width="1" height="2" fill="#444"/><rect x="156" y="1" width="1" height="1" fill="#444"/><rect x="160" y="0" width="1" height="2" fill="#444"/><rect x="164" y="1" width="1" height="1" fill="#444"/><rect x="168" y="0" width="1" height="2" fill="#444"/><rect x="172" y="1" width="1" height="1" fill="#444"/><rect x="176" y="0" width="1" height="2" fill="#444"/><rect x="180" y="1" width="1" height="1" fill="#444"/><rect x="184" y="0" width="1" height="2" fill="#444"/><rect x="188" y="1" width="1" height="1" fill="#444"/><rect x="192" y="0" width="1" height="2" fill="#444"/><rect x="196" y="1" width="1" height="1" fill="#444"/><rect x="200" y="0" width="1" height="2" fill="#444"/><rect x="204" y="1" width="1" height="1" fill="#444"/><rect x="208" y="0" width="1" height="2" fill="#444"/></svg>
<div class="t" style="left:260px;top:392.55px;">Alarm:</div>
<div class="btn" style="left:357px;top:407px;width:68px;height:20px;"></div>
<div class="led" style="left:362px;top:410px;width:4px;height:13px;background:#00ff00"></div>
<div class="t" style="left:373px;top:418.71px;font-size:13px;">Enabled</div>
<div class="btn" style="left:431px;top:407px;width:71px;height:20px;"></div>
<div class="led" style="left:436px;top:410px;width:4px;height:13px;background:#aa0000"></div>
<div class="t" style="left:446px;top:418.71px;font-size:13px;">Disabled</div>
<div class="t" style="left:260px;top:445.55px;">Trigger time:</div>
<div class="trk" style="left:357px;top:440px;width:132px;height:8px;"></div>
<svg style="position:absolute;left:424px;top:436px" width="8" height="16"><rect x="0.65" y="0.65" width="6.7" height="14.7" rx="3.35" fill="#b0b0ff" stroke="#0c0cff" stroke-width="1.3"/></svg>
<div class="inp" style="left:499px;top:435px;width:42px;height:17px;line-height:21.5px;font-size:12.5px;text-align:right;padding-right:4px;">05:00</div>
<div class="t" style="left:552px;top:445.55px;">min</div>
<div class="t" style="left:260px;top:470.55px;">Release time:</div>
<div class="trk" style="left:357px;top:465px;width:132px;height:8px;"></div>
<svg style="position:absolute;left:424px;top:461px" width="8" height="16"><rect x="0.65" y="0.65" width="6.7" height="14.7" rx="3.35" fill="#b0b0ff" stroke="#0c0cff" stroke-width="1.3"/></svg>
<div class="inp" style="left:499px;top:461px;width:42px;height:17px;line-height:21.5px;font-size:12.5px;text-align:right;padding-right:4px;">05:00</div>
<div class="t" style="left:552px;top:471.55px;">min</div>
<div class="btn" style="left:363px;top:487px;width:100px;height:22px;"></div>
<div class="led" style="left:368px;top:491px;width:4px;height:13px;background:#aa0000"></div>
<div class="bt" style="left:368px;top:487px;width:102px;height:24px;line-height:25.1px;font-size:13.5px;">Email</div>
<div class="btn" style="left:471px;top:487px;width:101px;height:22px;"></div>
<div class="led" style="left:476px;top:491px;width:4px;height:13px;background:#aa0000"></div>
<div class="bt" style="left:476px;top:487px;width:103px;height:24px;line-height:25.1px;font-size:13.5px;">SNMP</div>
<div class="fs" style="left:596px;top:346px;width:330px;height:169px;"></div>
<div class="lg" style="left:606.5px;top:335.7px;">RDS PI Alarm</div>
<div class="t" style="left:697px;top:362.55px;">Loss</div>
<div class="t" style="left:919px;top:362.55px;transform:translateX(-100%)">OK</div>
<svg style="position:absolute;left:695px;top:370px" width="8" height="5"><polygon points="0.5,0 7.5,0 4,5" fill="#000"/></svg>
<svg style="position:absolute;left:700px;top:377px" width="209" height="2"><rect x="0" y="0" width="1" height="2" fill="#444"/><rect x="4" y="1" width="1" height="1" fill="#444"/><rect x="8" y="0" width="1" height="2" fill="#444"/><rect x="12" y="1" width="1" height="1" fill="#444"/><rect x="16" y="0" width="1" height="2" fill="#444"/><rect x="20" y="1" width="1" height="1" fill="#444"/><rect x="24" y="0" width="1" height="2" fill="#444"/><rect x="28" y="1" width="1" height="1" fill="#444"/><rect x="32" y="0" width="1" height="2" fill="#444"/><rect x="36" y="1" width="1" height="1" fill="#444"/><rect x="40" y="0" width="1" height="2" fill="#444"/><rect x="44" y="1" width="1" height="1" fill="#444"/><rect x="48" y="0" width="1" height="2" fill="#444"/><rect x="52" y="1" width="1" height="1" fill="#444"/><rect x="56" y="0" width="1" height="2" fill="#444"/><rect x="60" y="1" width="1" height="1" fill="#444"/><rect x="64" y="0" width="1" height="2" fill="#444"/><rect x="68" y="1" width="1" height="1" fill="#444"/><rect x="72" y="0" width="1" height="2" fill="#444"/><rect x="76" y="1" width="1" height="1" fill="#444"/><rect x="80" y="0" width="1" height="2" fill="#444"/><rect x="84" y="1" width="1" height="1" fill="#444"/><rect x="88" y="0" width="1" height="2" fill="#444"/><rect x="92" y="1" width="1" height="1" fill="#444"/><rect x="96" y="0" width="1" height="2" fill="#444"/><rect x="100" y="1" width="1" height="1" fill="#444"/><rect x="104" y="0" width="1" height="2" fill="#444"/><rect x="108" y="1" width="1" height="1" fill="#444"/><rect x="112" y="0" width="1" height="2" fill="#444"/><rect x="116" y="1" width="1" height="1" fill="#444"/><rect x="120" y="0" width="1" height="2" fill="#444"/><rect x="124" y="1" width="1" height="1" fill="#444"/><rect x="128" y="0" width="1" height="2" fill="#444"/><rect x="132" y="1" width="1" height="1" fill="#444"/><rect x="136" y="0" width="1" height="2" fill="#444"/><rect x="140" y="1" width="1" height="1" fill="#444"/><rect x="144" y="0" width="1" height="2" fill="#444"/><rect x="148" y="1" width="1" height="1" fill="#444"/><rect x="152" y="0" width="1" height="2" fill="#444"/><rect x="156" y="1" width="1" height="1" fill="#444"/><rect x="160" y="0" width="1" height="2" fill="#444"/><rect x="164" y="1" width="1" height="1" fill="#444"/><rect x="168" y="0" width="1" height="2" fill="#444"/><rect x="172" y="1" width="1" height="1" fill="#444"/><rect x="176" y="0" width="1" height="2" fill="#444"/><rect x="180" y="1" width="1" height="1" fill="#444"/><rect x="184" y="0" width="1" height="2" fill="#444"/><rect x="188" y="1" width="1" height="1" fill="#444"/><rect x="192" y="0" width="1" height="2" fill="#444"/><rect x="196" y="1" width="1" height="1" fill="#444"/><rect x="200" y="0" width="1" height="2" fill="#444"/><rect x="204" y="1" width="1" height="1" fill="#444"/><rect x="208" y="0" width="1" height="2" fill="#444"/></svg>
<div class="t" style="left:602px;top:392.55px;">Alarm:</div>
<div class="t" style="left:699px;top:392.55px;">PI:</div>
<div class="inp" style="left:720px;top:382px;width:64px;height:18px;line-height:22.5px;font-size:12.5px;text-align:left;padding-right:0px;padding-left:2px;width:62px;border-color:#333;line-height:20.5px;">8091</div>
<div class="t" style="left:790px;top:392.55px;">/ CALL:</div>
<div class="inp" style="left:839px;top:382px;width:65px;height:18px;line-height:22.5px;font-size:12.5px;text-align:left;padding-right:0px;padding-left:2px;width:63px;border-color:#333;line-height:20.5px;">WQQJ</div>
<div class="btn" style="left:699px;top:407px;width:68px;height:20px;"></div>
<div class="led" style="left:704px;top:410px;width:4px;height:13px;background:#aa0000"></div>
<div class="t" style="left:715px;top:418.71px;font-size:13px;">Enabled</div>
<div class="btn" style="left:773px;top:407px;width:70px;height:20px;"></div>
<div class="led" style="left:778px;top:410px;width:4px;height:13px;background:#00ff00"></div>
<div class="t" style="left:788px;top:418.71px;font-size:13px;">Disabled</div>
<div class="t" style="left:602px;top:445.55px;">Trigger time:</div>
<div class="trk" style="left:699px;top:440px;width:132px;height:8px;"></div>
<svg style="position:absolute;left:766px;top:436px" width="8" height="16"><rect x="0.65" y="0.65" width="6.7" height="14.7" rx="3.35" fill="#b0b0ff" stroke="#0c0cff" stroke-width="1.3"/></svg>
<div class="inp" style="left:841px;top:435px;width:42px;height:17px;line-height:21.5px;font-size:12.5px;text-align:right;padding-right:4px;">05:00</div>
<div class="t" style="left:894px;top:445.55px;">min</div>
<div class="t" style="left:602px;top:470.55px;">Release time:</div>
<div class="trk" style="left:699px;top:465px;width:132px;height:8px;"></div>
<svg style="position:absolute;left:766px;top:461px" width="8" height="16"><rect x="0.65" y="0.65" width="6.7" height="14.7" rx="3.35" fill="#b0b0ff" stroke="#0c0cff" stroke-width="1.3"/></svg>
<div class="inp" style="left:841px;top:461px;width:42px;height:17px;line-height:21.5px;font-size:12.5px;text-align:right;padding-right:4px;">05:00</div>
<div class="t" style="left:894px;top:471.55px;">min</div>
<div class="btn" style="left:705px;top:487px;width:100px;height:22px;"></div>
<div class="led" style="left:710px;top:491px;width:4px;height:13px;background:#aa0000"></div>
<div class="bt" style="left:710px;top:487px;width:102px;height:24px;line-height:25.1px;font-size:13.5px;">Email</div>
<div class="btn" style="left:813px;top:487px;width:101px;height:22px;"></div>
<div class="led" style="left:818px;top:491px;width:4px;height:13px;background:#aa0000"></div>
<div class="bt" style="left:818px;top:487px;width:103px;height:24px;line-height:25.1px;font-size:13.5px;">SNMP</div>
<div class="fs" style="left:254px;top:531px;width:330px;height:221px;"></div>
<div class="lg" style="left:264.5px;top:520.7px;">RF Alarm</div>
<div class="t" style="left:355px;top:547.54px;">20</div>
<div class="t" style="left:447px;top:547.54px;">dB&mu;V</div>
<div class="t" style="left:577px;top:547.54px;transform:translateX(-100%)">110</div>
<svg style="position:absolute;left:358px;top:562px" width="209" height="2"><rect x="0" y="0" width="1" height="2" fill="#444"/><rect x="4" y="1" width="1" height="1" fill="#444"/><rect x="8" y="0" width="1" height="2" fill="#444"/><rect x="12" y="1" width="1" height="1" fill="#444"/><rect x="16" y="0" width="1" height="2" fill="#444"/><rect x="20" y="1" width="1" height="1" fill="#444"/><rect x="24" y="0" width="1" height="2" fill="#444"/><rect x="28" y="1" width="1" height="1" fill="#444"/><rect x="32" y="0" width="1" height="2" fill="#444"/><rect x="36" y="1" width="1" height="1" fill="#444"/><rect x="40" y="0" width="1" height="2" fill="#444"/><rect x="44" y="1" width="1" height="1" fill="#444"/><rect x="48" y="0" width="1" height="2" fill="#444"/><rect x="52" y="1" width="1" height="1" fill="#444"/><rect x="56" y="0" width="1" height="2" fill="#444"/><rect x="60" y="1" width="1" height="1" fill="#444"/><rect x="64" y="0" width="1" height="2" fill="#444"/><rect x="68" y="1" width="1" height="1" fill="#444"/><rect x="72" y="0" width="1" height="2" fill="#444"/><rect x="76" y="1" width="1" height="1" fill="#444"/><rect x="80" y="0" width="1" height="2" fill="#444"/><rect x="84" y="1" width="1" height="1" fill="#444"/><rect x="88" y="0" width="1" height="2" fill="#444"/><rect x="92" y="1" width="1" height="1" fill="#444"/><rect x="96" y="0" width="1" height="2" fill="#444"/><rect x="100" y="1" width="1" height="1" fill="#444"/><rect x="104" y="0" width="1" height="2" fill="#444"/><rect x="108" y="1" width="1" height="1" fill="#444"/><rect x="112" y="0" width="1" height="2" fill="#444"/><rect x="116" y="1" width="1" height="1" fill="#444"/><rect x="120" y="0" width="1" height="2" fill="#444"/><rect x="124" y="1" width="1" height="1" fill="#444"/><rect x="128" y="0" width="1" height="2" fill="#444"/><rect x="132" y="1" width="1" height="1" fill="#444"/><rect x="136" y="0" width="1" height="2" fill="#444"/><rect x="140" y="1" width="1" height="1" fill="#444"/><rect x="144" y="0" width="1" height="2" fill="#444"/><rect x="148" y="1" width="1" height="1" fill="#444"/><rect x="152" y="0" width="1" height="2" fill="#444"/><rect x="156" y="1" width="1" height="1" fill="#444"/><rect x="160" y="0" width="1" height="2" fill="#444"/><rect x="164" y="1" width="1" height="1" fill="#444"/><rect x="168" y="0" width="1" height="2" fill="#444"/><rect x="172" y="1" width="1" height="1" fill="#444"/><rect x="176" y="0" width="1" height="2" fill="#444"/><rect x="180" y="1" width="1" height="1" fill="#444"/><rect x="184" y="0" width="1" height="2" fill="#444"/><rect x="188" y="1" width="1" height="1" fill="#444"/><rect x="192" y="0" width="1" height="2" fill="#444"/><rect x="196" y="1" width="1" height="1" fill="#444"/><rect x="200" y="0" width="1" height="2" fill="#444"/><rect x="204" y="1" width="1" height="1" fill="#444"/><rect x="208" y="0" width="1" height="2" fill="#444"/></svg>
<svg style="position:absolute;left:476px;top:565px" width="8" height="5"><polygon points="0.5,0 7.5,0 4,5" fill="#000"/></svg>
<div class="t" style="left:260px;top:578.54px;">Alarm:</div>
<div class="trk" style="left:357px;top:571px;width:211px;height:8px;"></div>
<div class="rng" style="left:369px;top:572px;width:118px;height:8px;"></div>
<svg style="position:absolute;left:365px;top:568px" width="8" height="16"><rect x="0.65" y="0.65" width="6.7" height="14.7" rx="3.35" fill="#b0b0ff" stroke="#0c0cff" stroke-width="1.3"/></svg>
<svg style="position:absolute;left:482px;top:568px" width="8" height="16"><rect x="0.65" y="0.65" width="6.7" height="14.7" rx="3.35" fill="#b0b0ff" stroke="#0c0cff" stroke-width="1.3"/></svg>
<div class="btn" style="left:357px;top:592px;width:47px;height:17px;"></div>
<div class="led" style="left:362px;top:596px;width:4px;height:9px;background:#00ff00"></div>
<div class="t" style="left:374px;top:601.71px;font-size:13px;">Low</div>
<div class="inp" style="left:410px;top:592px;width:30px;height:17px;line-height:21.5px;font-size:12.5px;text-align:right;padding-right:4px;">25</div>
<div class="btn" style="left:491px;top:592px;width:47px;height:17px;"></div>
<div class="led" style="left:496px;top:596px;width:4px;height:9px;background:#aa0000"></div>
<div class="t" style="left:507px;top:601.71px;font-size:13px;">High</div>
<div class="inp" style="left:544px;top:592px;width:30px;height:17px;line-height:21.5px;font-size:12.5px;text-align:right;padding-right:4px;">75</div>
<div class="t" style="left:260px;top:630.54px;">Warning:</div>
<svg style="position:absolute;left:476px;top:617px" width="8" height="5"><polygon points="0.5,0 7.5,0 4,5" fill="#000"/></svg>
<div class="trk" style="left:357px;top:623px;width:211px;height:8px;"></div>
<div class="rng" style="left:404px;top:624px;width:83px;height:8px;"></div>
<svg style="position:absolute;left:400px;top:620px" width="8" height="16"><rect x="0.65" y="0.65" width="6.7" height="14.7" rx="3.35" fill="#b0b0ff" stroke="#0c0cff" stroke-width="1.3"/></svg>
<svg style="position:absolute;left:482px;top:620px" width="8" height="16"><rect x="0.65" y="0.65" width="6.7" height="14.7" rx="3.35" fill="#b0b0ff" stroke="#0c0cff" stroke-width="1.3"/></svg>
<div class="btn" style="left:357px;top:644px;width:47px;height:17px;"></div>
<div class="led" style="left:362px;top:648px;width:4px;height:9px;background:#aa0000"></div>
<div class="t" style="left:374px;top:653.71px;font-size:13px;">Low</div>
<div class="inp" style="left:410px;top:644px;width:30px;height:17px;line-height:21.5px;font-size:12.5px;text-align:right;padding-right:4px;">40</div>
<div class="btn" style="left:491px;top:644px;width:47px;height:17px;"></div>
<div class="led" style="left:496px;top:648px;width:4px;height:9px;background:#aa0000"></div>
<div class="t" style="left:507px;top:653.71px;font-size:13px;">High</div>
<div class="inp" style="left:544px;top:644px;width:30px;height:17px;line-height:21.5px;font-size:12.5px;text-align:right;padding-right:4px;">75</div>
<div class="t" style="left:260px;top:682.54px;">Trigger time:</div>
<div class="trk" style="left:357px;top:677px;width:132px;height:8px;"></div>
<svg style="position:absolute;left:424px;top:673px" width="8" height="16"><rect x="0.65" y="0.65" width="6.7" height="14.7" rx="3.35" fill="#b0b0ff" stroke="#0c0cff" stroke-width="1.3"/></svg>
<div class="inp" style="left:499px;top:672px;width:42px;height:17px;line-height:21.5px;font-size:12.5px;text-align:right;padding-right:4px;">05:00</div>
<div class="t" style="left:552px;top:682.54px;">min</div>
<div class="t" style="left:260px;top:707.54px;">Release time:</div>
<div class="trk" style="left:357px;top:702px;width:132px;height:8px;"></div>
<svg style="position:absolute;left:424px;top:698px" width="8" height="16"><rect x="0.65" y="0.65" width="6.7" height="14.7" rx="3.35" fill="#b0b0ff" stroke="#0c0cff" stroke-width="1.3"/></svg>
<div class="inp" style="left:499px;top:698px;width:42px;height:17px;line-height:21.5px;font-size:12.5px;text-align:right;padding-right:4px;">05:00</div>
<div class="t" style="left:552px;top:708.54px;">min</div>
<div class="btn" style="left:363px;top:724px;width:100px;height:22px;"></div>
<div class="led" style="left:368px;top:728px;width:4px;height:13px;background:#aa0000"></div>
<div class="bt" style="left:368px;top:724px;width:102px;height:24px;line-height:25.1px;font-size:13.5px;">Email</div>
<div class="btn" style="left:471px;top:724px;width:101px;height:22px;"></div>
<div class="led" style="left:476px;top:728px;width:4px;height:13px;background:#aa0000"></div>
<div class="bt" style="left:476px;top:724px;width:103px;height:24px;line-height:25.1px;font-size:13.5px;">SNMP</div>
<div class="fs" style="left:596px;top:531px;width:330px;height:221px;"></div>
<div class="lg" style="left:606.5px;top:520.7px;">RDS Group Alarm</div>
<div class="t" style="left:616px;top:552.13px;width:20px;text-align:center;font-size:10.5px;font-weight:bold;color:#111;">0</div>
<div style="left:620px;top:564px;width:11px;height:11px;border:1px solid #333;background:#fff;"></div>
<div style="left:620px;top:585px;width:11px;height:11px;border:1px solid #333;background:#fff;"></div>
<div class="t" style="left:635px;top:552.13px;width:20px;text-align:center;font-size:10.5px;font-weight:bold;color:#111;">1</div>
<div style="left:639px;top:564px;width:11px;height:11px;border:1px solid #333;background:#fff;"></div>
<div style="left:639px;top:585px;width:11px;height:11px;border:1px solid #333;background:#fff;"></div>
<div class="t" style="left:654px;top:552.13px;width:20px;text-align:center;font-size:10.5px;font-weight:bold;color:#111;">2</div>
<div style="left:658px;top:564px;width:11px;height:11px;border:1px solid #333;background:#fff;"></div>
<div style="left:658px;top:585px;width:11px;height:11px;border:1px solid #333;background:#fff;"></div>
<div class="t" style="left:673px;top:552.13px;width:20px;text-align:center;font-size:10.5px;font-weight:bold;color:#111;">3</div>
<div style="left:677px;top:564px;width:11px;height:11px;border:1px solid #333;background:#fff;"></div>
<div style="left:677px;top:585px;width:11px;height:11px;border:1px solid #333;background:#fff;"></div>
<div class="t" style="left:692px;top:552.13px;width:20px;text-align:center;font-size:10.5px;font-weight:bold;color:#111;">4</div>
<div style="left:696px;top:564px;width:11px;height:11px;border:1px solid #333;background:#fff;"></div>
<div style="left:696px;top:585px;width:11px;height:11px;border:1px solid #333;background:#fff;"></div>
<div class="t" style="left:711px;top:552.13px;width:20px;text-align:center;font-size:10.5px;font-weight:bold;color:#111;">5</div>
<div style="left:715px;top:564px;width:11px;height:11px;border:1px solid #333;background:#fff;"></div>
<div style="left:715px;top:585px;width:11px;height:11px;border:1px solid #333;background:#fff;"></div>
<div class="t" style="left:730px;top:552.13px;width:20px;text-align:center;font-size:10.5px;font-weight:bold;color:#111;">6</div>
<div style="left:734px;top:564px;width:11px;height:11px;border:1px solid #333;background:#fff;"></div>
<div style="left:734px;top:585px;width:11px;height:11px;border:1px solid #333;background:#fff;"></div>
<div class="t" style="left:749px;top:552.13px;width:20px;text-align:center;font-size:10.5px;font-weight:bold;color:#111;">7</div>
<div style="left:753px;top:564px;width:11px;height:11px;border:1px solid #333;background:#fff;"></div>
<div style="left:753px;top:585px;width:11px;height:11px;border:1px solid #333;background:#fff;"></div>
<div class="t" style="left:768px;top:552.13px;width:20px;text-align:center;font-size:10.5px;font-weight:bold;color:#111;">8</div>
<div style="left:772px;top:564px;width:11px;height:11px;border:1px solid #333;background:#fff;"></div>
<div style="left:772px;top:585px;width:11px;height:11px;border:1px solid #333;background:#fff;"></div>
<div class="t" style="left:787px;top:552.13px;width:20px;text-align:center;font-size:10.5px;font-weight:bold;color:#111;">9</div>
<div style="left:791px;top:564px;width:11px;height:11px;border:1px solid #333;background:#fff;"></div>
<div style="left:791px;top:585px;width:11px;height:11px;border:1px solid #333;background:#fff;"></div>
<div class="t" style="left:806px;top:552.13px;width:20px;text-align:center;font-size:10.5px;font-weight:bold;color:#111;">10</div>
<div style="left:810px;top:564px;width:11px;height:11px;border:1px solid #333;background:#fff;"></div>
<div style="left:810px;top:585px;width:11px;height:11px;border:1px solid #333;background:#fff;"></div>
<div class="t" style="left:825px;top:552.13px;width:20px;text-align:center;font-size:10.5px;font-weight:bold;color:#111;">11</div>
<div style="left:829px;top:564px;width:11px;height:11px;border:1px solid #333;background:#fff;"></div>
<div style="left:829px;top:585px;width:11px;height:11px;border:1px solid #333;background:#fff;"></div>
<div class="t" style="left:844px;top:552.13px;width:20px;text-align:center;font-size:10.5px;font-weight:bold;color:#111;">12</div>
<div style="left:848px;top:564px;width:11px;height:11px;border:1px solid #333;background:#fff;"></div>
<div style="left:848px;top:585px;width:11px;height:11px;border:1px solid #333;background:#fff;"></div>
<div class="t" style="left:863px;top:552.13px;width:20px;text-align:center;font-size:10.5px;font-weight:bold;color:#111;">13</div>
<div style="left:867px;top:564px;width:11px;height:11px;border:1px solid #333;background:#fff;"></div>
<div style="left:867px;top:585px;width:11px;height:11px;border:1px solid #333;background:#fff;"></div>
<div class="t" style="left:882px;top:552.13px;width:20px;text-align:center;font-size:10.5px;font-weight:bold;color:#111;">14</div>
<div style="left:886px;top:564px;width:11px;height:11px;border:1px solid #333;background:#fff;"></div>
<div style="left:886px;top:585px;width:11px;height:11px;border:1px solid #333;background:#fff;"></div>
<div class="t" style="left:901px;top:552.13px;width:20px;text-align:center;font-size:10.5px;font-weight:bold;color:#111;">15</div>
<div style="left:905px;top:564px;width:11px;height:11px;border:1px solid #333;background:#fff;"></div>
<div style="left:905px;top:585px;width:11px;height:11px;border:1px solid #333;background:#fff;"></div>
<div class="t" style="left:604px;top:570.53px;font-size:10.5px;font-weight:bold;">A:</div>
<div class="t" style="left:605px;top:591.74px;font-size:10.5px;font-weight:bold;">B:</div>
<div class="t" style="left:602px;top:682.54px;">Trigger time:</div>
<div class="trk" style="left:699px;top:677px;width:132px;height:8px;"></div>
<svg style="position:absolute;left:766px;top:673px" width="8" height="16"><rect x="0.65" y="0.65" width="6.7" height="14.7" rx="3.35" fill="#b0b0ff" stroke="#0c0cff" stroke-width="1.3"/></svg>
<div class="inp" style="left:841px;top:672px;width:42px;height:17px;line-height:21.5px;font-size:12.5px;text-align:right;padding-right:4px;">05:00</div>
<div class="t" style="left:894px;top:682.54px;">min</div>
<div class="t" style="left:602px;top:707.54px;">Release time:</div>
<div class="trk" style="left:699px;top:702px;width:132px;height:8px;"></div>
<svg style="position:absolute;left:766px;top:698px" width="8" height="16"><rect x="0.65" y="0.65" width="6.7" height="14.7" rx="3.35" fill="#b0b0ff" stroke="#0c0cff" stroke-width="1.3"/></svg>
<div class="inp" style="left:841px;top:698px;width:42px;height:17px;line-height:21.5px;font-size:12.5px;text-align:right;padding-right:4px;">05:00</div>
<div class="t" style="left:894px;top:708.54px;">min</div>
<div class="btn" style="left:705px;top:724px;width:100px;height:22px;"></div>
<div class="led" style="left:710px;top:728px;width:4px;height:13px;background:#aa0000"></div>
<div class="bt" style="left:710px;top:724px;width:102px;height:24px;line-height:25.1px;font-size:13.5px;">Email</div>
<div class="btn" style="left:813px;top:724px;width:101px;height:22px;"></div>
<div class="led" style="left:818px;top:728px;width:4px;height:13px;background:#aa0000"></div>
<div class="bt" style="left:818px;top:724px;width:103px;height:24px;line-height:25.1px;font-size:13.5px;">SNMP</div>
<div class="btn" style="left:845px;top:813px;width:80px;height:31px;"></div>
<div class="bt" style="left:845px;top:813px;width:82px;height:33px;line-height:32.8px;font-size:14px;">Save</div>
<div class="nav" style="left:944px;top:102px;width:85px;height:26px;"></div>
<div class="t" style="left:944px;top:115.88px;width:87px;text-align:center;font-size:14px;color:#1010e0;">Logout</div>
<div class="nav" style="left:944px;top:235px;width:85px;height:26px;"></div>
<div class="t" style="left:944px;top:249.18px;width:87px;text-align:center;font-size:14px;color:#1010e0;">Main</div>
<div class="nav" style="left:944px;top:265px;width:85px;height:26px;"></div>
<div class="t" style="left:944px;top:279.18px;width:87px;text-align:center;font-size:14px;color:#1010e0;">RDS</div>
<div class="nav" style="left:944px;top:295px;width:85px;height:26px;"></div>
<div class="t" style="left:944px;top:309.18px;width:87px;text-align:center;font-size:14px;color:#1010e0;">Bandscan</div>
<div class="nav" style="left:944px;top:325px;width:85px;height:26px;"></div>
<div class="t" style="left:944px;top:339.18px;width:87px;text-align:center;font-size:14px;color:#1010e0;">Channels</div>
<div style="left:940px;top:355px;width:90px;height:27px;border:1px solid #3f86cc;border-left:none;border-radius:0 5px 5px 0;background:#fff;"></div>
<div class="t" style="left:940px;top:368.98px;width:91px;text-align:center;font-size:14px;font-weight:bold;color:#1010e0;">Alarms</div>
<div class="nav" style="left:944px;top:385px;width:85px;height:26px;"></div>
<div class="t" style="left:944px;top:399.18px;width:87px;text-align:center;font-size:14px;color:#1010e0;">Status</div>
<div class="nav" style="left:944px;top:415px;width:85px;height:26px;"></div>
<div class="t" style="left:944px;top:429.18px;width:87px;text-align:center;font-size:14px;color:#1010e0;">Log</div>
<div class="nav" style="left:944px;top:445px;width:85px;height:26px;"></div>
<div class="t" style="left:944px;top:459.18px;width:87px;text-align:center;font-size:14px;color:#1010e0;">Settings</div>
<div style="left:944px;top:822px;width:85px;height:26px;border:1px solid #6f8f6f;border-radius:4px;background:linear-gradient(#8ef08e 0,#8ef08e 50%,#80e880 50%,#80e880 100%);"></div>
<svg style="position:absolute;left:975px;top:826px" width="26" height="20"><path d="M1,7 H5 L11,2 V18 L5,13 H1 Z" fill="#000"/><path d="M13.5,7 A4,4 0 0 1 13.5,13 M16.5,5 A6.5,6.5 0 0 1 16.5,15 M19.5,3 A9,9 0 0 1 19.5,17" fill="none" stroke="#000" stroke-width="1.9"/></svg>
</body></html>
